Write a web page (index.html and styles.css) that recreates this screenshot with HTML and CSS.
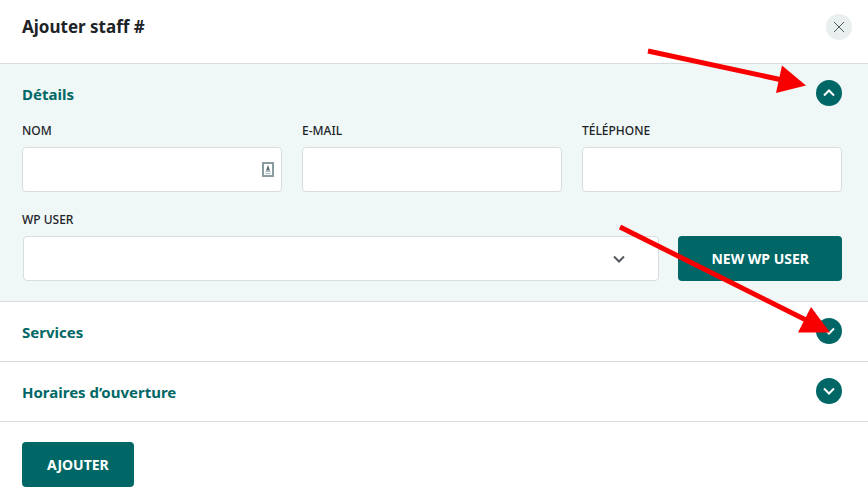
FILE: index.html
```html
<!DOCTYPE html>
<html lang="fr">
  <head>
    <meta charset="UTF-8" />
    <meta name="viewport" content="width=device-width, initial-scale=1.0" />
    <title>Ajouter staff</title>
    <link rel="stylesheet" href="styles.css">
  </head>
  <body>
    <form class="panel">
      <header class="panel-header">
        <h1>Ajouter staff #</h1>
        <button type="button" class="round close" aria-label="Fermer">
          <svg width="12" height="12" viewBox="0 0 12 12"><path d="M1 1l10 10M11 1L1 11" /></svg>
        </button>
      </header>

      <section class="section open">
        <div class="section-header">
          <h2>Détails</h2>
          <button type="button" class="round toggle" aria-label="Replier Détails" aria-expanded="true">
            <svg width="12" height="8" viewBox="0 0 12 8"><path d="M1 6.5l5-5 5 5" /></svg>
          </button>
        </div>
        <div class="section-body">
          <div class="fields">
            <div class="field">
              <label for="name">NOM</label>
              <div class="control">
                <input type="text" id="name" />
                <svg class="card-icon" width="12" height="16" viewBox="0 0 12 16">
                  <rect x="1" y="1" width="10" height="13" fill="#fff" stroke="#8a9c9f" stroke-width="2" />
                  <path d="M6 3L4 8.5h4z" fill="#596b70" />
                  <path d="M3.5 9.5h5M3.5 11.5h5" stroke="#a0b8ba" />
                </svg>
              </div>
            </div>
            <div class="field">
              <label for="email">E-MAIL</label>
              <input type="email" id="email" />
            </div>
            <div class="field">
              <label for="phone">TÉLÉPHONE</label>
              <input type="tel" id="phone" />
            </div>
          </div>
          <div class="user-row">
            <div class="field">
              <label for="wp-user">WP USER</label>
              <div class="control">
                <select id="wp-user">
                  <option></option>
                </select>
                <svg class="select-icon" width="12" height="8" viewBox="0 0 12 8"><path d="M1 1.5l5 5 5-5" /></svg>
              </div>
            </div>
            <button type="button" class="btn btn-wide">NEW WP USER</button>
          </div>
        </div>
      </section>

      <section class="section">
        <div class="section-header">
          <h2>Services</h2>
          <button type="button" class="round toggle" aria-label="Ouvrir Services" aria-expanded="false">
            <svg width="12" height="8" viewBox="0 0 12 8"><path d="M1 1.5l5 5 5-5" /></svg>
          </button>
        </div>
      </section>

      <section class="section">
        <div class="section-header">
          <h2>Horaires d’ouverture</h2>
          <button type="button" class="round toggle" aria-label="Ouvrir Horaires" aria-expanded="false">
            <svg width="12" height="8" viewBox="0 0 12 8"><path d="M1 1.5l5 5 5-5" /></svg>
          </button>
        </div>
      </section>

      <footer class="panel-footer">
        <button type="submit" class="btn">AJOUTER</button>
      </footer>

      <!-- red pointers to the section toggles -->
      <svg class="arrows" width="260" height="300" viewBox="608 40 260 300" aria-hidden="true">
        <path d="M648 51L780 79.5M620 227L806 320" />
        <polygon points="806,85.5 782,65.5 776,93" />
        <polygon points="830,332.5 811,307 798,332.5" />
      </svg>
    </form>
  </body>
</html>
```

FILE: styles.css
```css
* {
  box-sizing: border-box;
}

body {
  margin: 0;
  background-color: #fff;
  font-family: "Segoe UI", "Noto Sans", "Open Sans", sans-serif;
  color: #1d2327;
}

h1,
h2 {
  margin: 0;
  font-weight: 700;
}

h1 {
  font-size: 17px;
  line-height: 30px;
}

h2 {
  font-size: 15px;
  line-height: 28px;
  color: #006766;
}

.panel {
  position: relative;
}

.panel-header {
  display: flex;
  justify-content: space-between;
  align-items: center;
  padding: 12px 16px 21px 22px;
  border-bottom: 1px solid #d9dcdd;
}

.section {
  border-bottom: 1px solid #d9dcdd;
}

.section.open {
  background-color: #eff8f7;
}

.section-header {
  display: flex;
  justify-content: space-between;
  align-items: flex-start;
  padding: 16px 26px 15px 22px;
}

.section-body {
  padding: 0 26px 20px 22px;
}

.open .section-header {
  padding-bottom: 12px;
}

.round {
  display: flex;
  align-items: center;
  justify-content: center;
  width: 26px;
  height: 26px;
  padding: 0;
  border: 0;
  border-radius: 50%;
  cursor: pointer;
}

.round svg,
.select-icon {
  fill: none;
  stroke: #fff;
  stroke-width: 2;
}

.close {
  background-color: #e9eeee;
}

.round.close svg {
  stroke: #50605f;
  stroke-width: 1;
}

.toggle {
  background-color: #006766;
}

.fields {
  display: grid;
  grid-template-columns: repeat(3, 1fr);
  gap: 20px;
}

label {
  display: block;
  margin-bottom: 5px;
  font-size: 12px;
  line-height: 22px;
  font-weight: 500;
}

input,
select {
  display: block;
  width: 100%;
  height: 45px;
  padding: 0 14px;
  border: 1px solid #d9dcdd;
  border-radius: 4px;
  background-color: #fff;
  font: inherit;
  font-size: 14px;
  appearance: none;
}

.control {
  position: relative;
}

.card-icon {
  position: absolute;
  top: 15px;
  right: 8px;
}

.select-icon {
  position: absolute;
  top: 19px;
  right: 34px;
}

.control .select-icon {
  stroke: #50575e;
}

.user-row {
  display: flex;
  align-items: flex-end;
  gap: 19px;
  margin-top: 17px;
}

.user-row .field {
  flex: 1;
}

.user-row .control {
  margin-left: 1px;
}

.btn {
  height: 45px;
  padding: 0 25px;
  border: 0;
  border-radius: 4px;
  background-color: #006766;
  color: #fff;
  font: inherit;
  font-size: 14px;
  font-weight: 700;
  cursor: pointer;
}

.btn-wide {
  padding: 0 33px;
}

.panel-footer {
  padding: 20px 22px 16px;
}

.arrows {
  position: absolute;
  top: 40px;
  right: 0;
  fill: #f90000;
  pointer-events: none;
}

.arrows path {
  stroke: #f90000;
  stroke-width: 5;
}
```
